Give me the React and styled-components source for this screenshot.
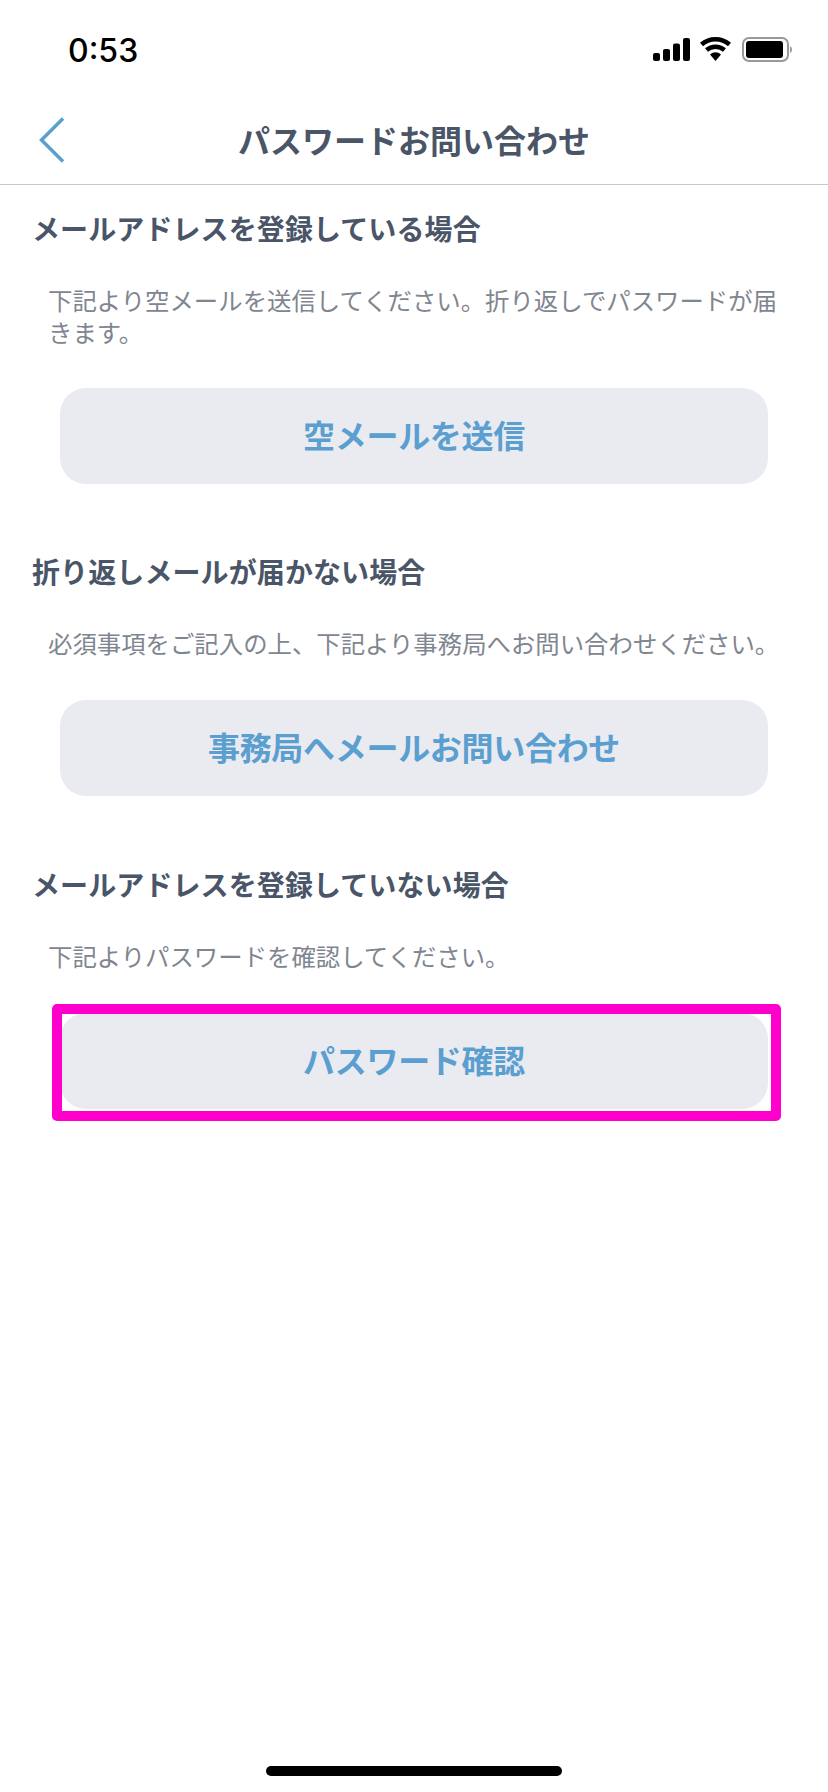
import styled, { createGlobalStyle } from "styled-components";

const GlobalStyle = createGlobalStyle`
  html, body {
    margin: 0;
    padding: 0;
    background: #fff;
  }
  * {
    box-sizing: border-box;
  }
`;

const Page = styled.div`
  position: relative;
  width: 828px;
  height: 1792px;
  overflow: hidden;
  background: #fff;
  font-family: "Noto Sans CJK JP", "Liberation Sans", sans-serif;
`;

const StatusBar = styled.div`
  display: flex;
  align-items: center;
  justify-content: space-between;
  height: 100px;
  padding: 0 33px 0 68px;
`;

const Time = styled.span`
  font-family: Inter, "Liberation Sans", sans-serif;
  font-size: 32px;
  font-weight: 500;
  color: #000;
`;

const NavBar = styled.header`
  position: relative;
  display: flex;
  align-items: center;
  justify-content: center;
  height: 85px;
  padding-bottom: 7px;
  border-bottom: 1px solid #c8c8cc;
`;

const BackButton = styled.div`
  position: absolute;
  left: 39px;
  top: 17px;
  display: flex;
`;

const Title = styled.h1`
  margin: 0;
  font-size: 32px;
  font-weight: 700;
  color: #4a5568;
`;

const Section = styled.section`
  padding-top: ${(p) => p.$top}px;
`;

const Heading = styled.h2`
  margin: 0 0 0 32px;
  font-size: 28px;
  line-height: 40px;
  font-weight: 700;
  letter-spacing: 0.1px;
  color: #4a5568;
`;

const Body = styled.p`
  margin: 36px 0 0;
  padding: 0 40px 0 48px;
  font-size: 24.4px;
  line-height: 32px;
  color: #808690;
`;

const ActionButton = styled.div`
  display: flex;
  align-items: center;
  justify-content: center;
  width: 708px;
  height: 96px;
  margin: ${(p) => p.$gap}px 0 0 60px;
  padding-bottom: 4px;
  border-radius: 26px;
  background: #eaebf0;
  font-size: 32px;
  font-weight: 700;
  letter-spacing: -0.3px;
  color: #5a9fd0;
`;

const Highlighted = styled.div`
  position: relative;
`;

const Highlight = styled.div`
  position: absolute;
  left: 52px;
  top: -9px;
  width: 729px;
  height: 117px;
  border: 10px solid #ff00cc;
  border-radius: 5px;
`;

const HomeIndicator = styled.div`
  position: absolute;
  left: 266px;
  bottom: 16px;
  width: 296px;
  height: 10px;
  border-radius: 5px;
  background: #000;
`;

const StatusIcons = () => (
  <svg width="142" height="30" viewBox="0 0 142 30">
    <rect x="0" y="18" width="7" height="8" rx="2" fill="#000" />
    <rect x="10" y="14" width="7" height="12" rx="2" fill="#000" />
    <rect x="20" y="8.500" width="7" height="17.500" rx="2" fill="#000" />
    <rect x="30" y="3" width="7" height="23" rx="2" fill="#000" />
    <path d="M48.500 9.500 A21 21 0 0 1 76.500 9.500" fill="none" stroke="#000" strokeWidth="4.500" />
    <path d="M53.500 15 A14 14 0 0 1 71.500 15" fill="none" stroke="#000" strokeWidth="4.500" />
    <path d="M57 19.500 A8 8 0 0 1 68 19.500 L62.500 26 Z" fill="#000" />
    <rect x="90" y="3" width="45" height="23" rx="6" fill="none" stroke="#999" strokeWidth="2" />
    <rect x="93" y="6" width="37" height="17" rx="3" fill="#000" />
    <path d="M137 11 a4 4 0 0 1 0 7 Z" fill="#999" />
  </svg>
);

const Chevron = () => (
  <svg width="26" height="46" viewBox="0 0 26 46">
    <path d="M24 1.500 L2.500 23 L24 44.500" fill="none" stroke="#5a9fd0" strokeWidth="3.500" />
  </svg>
);

export default function App() {
  return (
    <Page>
      <GlobalStyle />
      <StatusBar>
        <Time>0:53</Time>
        <StatusIcons />
      </StatusBar>
      <NavBar>
        <BackButton>
          <Chevron />
        </BackButton>
        <Title>パスワードお問い合わせ</Title>
      </NavBar>
      <Section $top={23}>
        <Heading>メールアドレスを登録している場合</Heading>
        <Body>
          下記より空メールを送信してください。折り返しでパスワードが届きます。
        </Body>
        <ActionButton $gap={40}>空メールを送信</ActionButton>
      </Section>
      <Section $top={67}>
        <Heading>折り返しメールが届かない場合</Heading>
        <Body>必須事項をご記入の上、下記より事務局へお問い合わせください。</Body>
        <ActionButton $gap={41}>事務局へメールお問い合わせ</ActionButton>
      </Section>
      <Section $top={68}>
        <Heading>メールアドレスを登録していない場合</Heading>
        <Body>下記よりパスワードを確認してください。</Body>
        <Highlighted>
          <ActionButton $gap={41}>パスワード確認</ActionButton>
          <Highlight />
        </Highlighted>
      </Section>
      <HomeIndicator />
    </Page>
  );
}
